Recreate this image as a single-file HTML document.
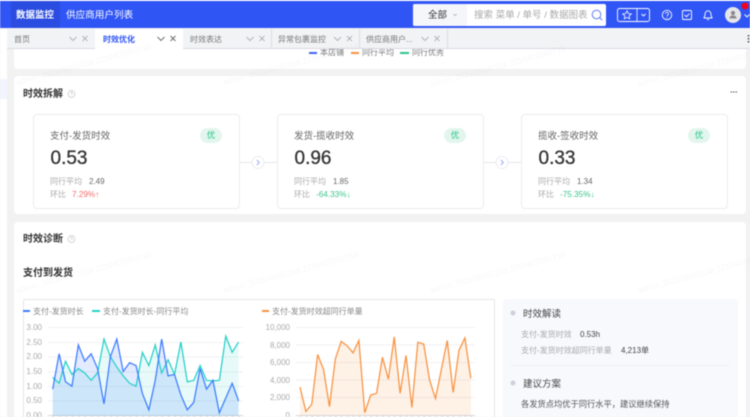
<!DOCTYPE html>
<html lang="zh">
<head>
<meta charset="utf-8">
<title>时效优化</title>
<style>
html,body{margin:0;padding:0;width:750px;height:417px;overflow:hidden;background:#f2f2f3}
body{position:relative;font-family:"Liberation Sans","Noto Sans CJK SC",sans-serif;color:#333}
#r{position:absolute;left:0;top:0;width:750px;height:417px;overflow:hidden;filter:blur(.45px)}
.b{position:absolute;box-sizing:border-box}
.t{position:absolute;white-space:nowrap;line-height:12px;height:12px;margin-top:1.5px}
.card{position:absolute;box-sizing:border-box;background:#fff;border:1px solid #ececee;border-radius:4px;top:114px;width:207px;height:95px}
.tab{font-size:8px;color:#777}
.k{font-size:9.5px;color:#666}
.v{font-size:19px;color:#333;line-height:24px;height:24px;-webkit-text-stroke:.3px #333}
.g{font-size:8px;color:#aaa}
.n{font-size:8px;color:#666}
.up{font-size:8.2px;color:#f56c6c}
.dn{font-size:8.2px;color:#3cc48c}
.badge{position:absolute;width:22px;height:15px;top:128px;border-radius:8px;background:#e3f6ee;color:#2bc48a;font-size:8.5px;line-height:15px;text-align:center}
.h{font-size:10px;font-weight:700;color:#333}
.ax{font-size:8px;color:#aaa;text-align:right;margin-top:.7px}
.l{font-size:8px;color:#888}
svg{position:absolute;left:0;top:0;overflow:visible}
</style>
</head>
<body>
<div id="r">
  <!-- sidebar -->
  <div class="b" style="left:0;top:29px;width:7px;height:388px;background:#fff"></div>
  <div class="b" style="left:0;top:79px;width:7px;height:20px;background:#f2f5ff"></div>

  <!-- cards -->
  <div class="b" style="left:14px;top:40px;width:732px;height:29px;background:#fff;border-radius:4px"></div>
  <div class="b" style="left:14px;top:76px;width:732px;height:138px;background:#fff;border-radius:4px"></div>
  <div class="b" style="left:14px;top:222px;width:732px;height:200px;background:#fff;border-radius:4px"></div>

  <!-- legend top -->
  <div class="b" style="left:309px;top:52px;width:8px;height:2px;background:#3d63f5"></div>
  <div class="t l" style="left:320px;top:45px;color:#777">本店铺</div>
  <div class="b" style="left:351px;top:52px;width:8px;height:2px;background:#f79240"></div>
  <div class="t l" style="left:362px;top:45px;color:#777">同行平均</div>
  <div class="b" style="left:400px;top:52px;width:9px;height:2px;background:#2bc48a"></div>
  <div class="t l" style="left:412px;top:45px;color:#777">同行优秀</div>

  <!-- nav -->
  <div class="b" style="left:0;top:0;width:750px;height:1px;background:#fff"></div>
  <div class="b" style="left:0;top:1px;width:750px;height:27px;background:#2f55f5"></div>
  <div class="b" style="left:11px;top:1px;width:49px;height:27px;background:#2a4ce0"></div>
  <div class="t" style="left:16px;top:8px;font-size:9.5px;font-weight:700;color:#fff">数据监控</div>
  <div class="t" style="left:66px;top:8px;font-size:9.6px;color:#fff">供应商用户列表</div>

  <div class="b" style="left:413px;top:4px;width:193px;height:22px;background:#fff;border-radius:2px"></div>
  <div class="b" style="left:413px;top:4px;width:54px;height:22px;background:#f5f6fa;border-radius:2px 0 0 2px"></div>
  <div class="t" style="left:428px;top:8px;font-size:9.5px;color:#333">全部</div>
  <div class="b" style="left:474px;top:8px;width:115px;height:15px;overflow:hidden"><div class="t" style="left:0;top:0;font-size:9.5px;color:#aaa">搜索 菜单 / 单号 / 数据图表</div></div>

  <!-- tabs -->
  <div class="b" style="left:7px;top:29px;width:743px;height:20px;background:#f2f3f5;border-bottom:1px solid #d9d9e2"></div>
  <div class="b" style="left:95px;top:29px;width:88px;height:20px;background:#fff"></div>
  <div class="b" style="left:271px;top:29px;width:1px;height:19px;background:#dcdce2"></div>
  <div class="b" style="left:359px;top:29px;width:1px;height:19px;background:#dcdce2"></div>
  <div class="b" style="left:447px;top:29px;width:1px;height:19px;background:#dcdce2"></div>
  <div class="t tab" style="left:14px;top:32.500px">首页</div>
  <div class="t tab" style="left:103px;top:32.500px;color:#2f55f5;font-weight:700">时效优化</div>
  <div class="t tab" style="left:190px;top:32.500px">时效表达</div>
  <div class="t tab" style="left:278px;top:32.500px">异常包裹监控</div>
  <div class="t tab" style="left:366px;top:32.500px">供应商用户...</div>

  <!-- main titles -->
  <div class="t h" style="left:23px;top:87px">时效拆解</div>
  <div class="t h" style="left:23px;top:232px">时效诊断</div>
  <div class="t h" style="left:23px;top:266px">支付到发货</div>

  <!-- connectors -->
  <div class="b" style="left:239px;top:162px;width:38px;height:1px;background:#e6e6e8"></div>
  <div class="b" style="left:483px;top:162px;width:39px;height:1px;background:#e6e6e8"></div>

  <!-- metric cards -->
  <div class="card" style="left:33px"></div>
  <div class="card" style="left:277px"></div>
  <div class="card" style="left:521px"></div>

  <div class="t k" style="left:50px;top:129px">支付-发货时效</div>
  <div class="t v" style="left:50.5px;top:145px">0.53</div>
  <div class="t g" style="left:50px;top:174px">同行平均</div>
  <div class="t n" style="left:89px;top:174px">2.49</div>
  <div class="t g" style="left:50px;top:187px">环比</div>
  <div class="t up" style="left:72px;top:187px">7.29%↑</div>
  <div class="badge" style="left:200px">优</div>

  <div class="t k" style="left:294px;top:129px">发货-揽收时效</div>
  <div class="t v" style="left:294.5px;top:145px">0.96</div>
  <div class="t g" style="left:294px;top:174px">同行平均</div>
  <div class="t n" style="left:333px;top:174px">1.85</div>
  <div class="t g" style="left:294px;top:187px">环比</div>
  <div class="t dn" style="left:316px;top:187px">-64.33%↓</div>
  <div class="badge" style="left:444px">优</div>

  <div class="t k" style="left:538px;top:129px">揽收-签收时效</div>
  <div class="t v" style="left:538.5px;top:145px">0.33</div>
  <div class="t g" style="left:538px;top:174px">同行平均</div>
  <div class="t n" style="left:577px;top:174px">1.34</div>
  <div class="t g" style="left:538px;top:187px">环比</div>
  <div class="t dn" style="left:560px;top:187px">-75.35%↓</div>
  <div class="badge" style="left:688px">优</div>

  <!-- diagnostics panels -->
  <div class="b" style="left:23px;top:299px;width:472px;height:130px;border:1px solid #e6e6e8;border-radius:2px;background:#fff"></div>
  <div class="b" style="left:503px;top:299px;width:235px;height:130px;background:#f8f9fd;border-radius:3px"></div>

  <!-- chart legends -->
  <div class="b" style="left:23px;top:310px;width:7px;height:2px;background:#3d7cff;z-index:2"></div>
  <div class="t l" style="left:33px;top:304px">支付-发货时长</div>
  <div class="b" style="left:92px;top:310px;width:8px;height:2px;background:#25d0c8;z-index:2"></div>
  <div class="t l" style="left:103px;top:304px">支付-发货时长-同行平均</div>
  <div class="b" style="left:262px;top:310px;width:7px;height:2px;background:#f79240;z-index:2"></div>
  <div class="t l" style="left:272px;top:304px">支付-发货时效超同行单量</div>

  <!-- axes labels -->
  <div class="t ax" style="left:12px;width:30px;top:321px">3.00</div>
  <div class="t ax" style="left:12px;width:30px;top:336px">2.50</div>
  <div class="t ax" style="left:12px;width:30px;top:350px">2.00</div>
  <div class="t ax" style="left:12px;width:30px;top:365px">1.50</div>
  <div class="t ax" style="left:12px;width:30px;top:380px">1.00</div>
  <div class="t ax" style="left:12px;width:30px;top:394px">0.50</div>
  <div class="t ax" style="left:12px;width:30px;top:409px">0.00</div>

  <div class="t ax" style="left:255px;width:35px;top:321px">10,000</div>
  <div class="t ax" style="left:255px;width:35px;top:339px">8,000</div>
  <div class="t ax" style="left:255px;width:35px;top:356px">6,000</div>
  <div class="t ax" style="left:255px;width:35px;top:374px">4,000</div>
  <div class="t ax" style="left:255px;width:35px;top:391px">2,000</div>
  <div class="t ax" style="left:255px;width:35px;top:409px">0</div>

  <!-- charts and icons -->
  <svg width="750" height="417" viewBox="0 0 750 417" xmlns="http://www.w3.org/2000/svg">
    <g stroke="#f1f1f3" stroke-width="1">
      <path d="M48 327.5H243M48 342.5H243M48 357H243M48 372H243M48 386.5H243M48 401H243"/>
      <path d="M296 327.5H475M296 345H475M296 362.5H475M296 380H475M296 397.5H475"/>
    </g>
    <path d="M48 415.5H243M296 415.5H475" stroke="#d8d8dc" stroke-width="1"/>
    <path d="M52.7 416.5H243" stroke="#c8c8cc" stroke-width="1" stroke-dasharray="1 5.41"/>
    <path d="M300 416.5H475" stroke="#c8c8cc" stroke-width="1" stroke-dasharray="1 4.89"/>
    <g transform="translate(52.7,415.7) scale(6.41,-29.47)">
      <polygon fill="#25d0c8" fill-opacity=".11" points="0,0 0,1.3 1,1.1 2,1.85 3,1.4 4,1.6 5,1.45 6,1.2 7,1.45 8,2.6 9,2 10,1.65 11,1.35 12,1.1 13,1 14,2.15 15,1.7 16,2.4 17,1.45 18,1.9 19,1.4 20,2.5 21,1.15 22,1.2 23,1.7 24,1.2 25,1.18 26,1.2 27,2.7 28,2.15 29,2.5 29,0"/>
      <polygon fill="#3d7cff" fill-opacity=".15" points="0,0 0,.9 1,2.1 2,1.15 3,1 4,2.4 5,1.85 6,2.1 7,1.6 8,.4 9,2 10,2.6 11,1.5 12,1.8 13,1.7 14,.75 15,.2 16,1.2 17,2.6 18,1.35 19,1.4 20,.7 21,.2 22,.45 23,1.6 24,.9 25,1.2 26,.1 27,.6 28,1.1 29,.5 29,0"/>
      <polyline fill="none" stroke="#25d0c8" stroke-width="1.25" vector-effect="non-scaling-stroke" points="0,1.3 1,1.1 2,1.85 3,1.4 4,1.6 5,1.45 6,1.2 7,1.45 8,2.6 9,2 10,1.65 11,1.35 12,1.1 13,1 14,2.15 15,1.7 16,2.4 17,1.45 18,1.9 19,1.4 20,2.5 21,1.15 22,1.2 23,1.7 24,1.2 25,1.18 26,1.2 27,2.7 28,2.15 29,2.5"/>
      <polyline fill="none" stroke="#3d7cff" stroke-width="1.25" vector-effect="non-scaling-stroke" points="0,.9 1,2.1 2,1.15 3,1 4,2.4 5,1.85 6,2.1 7,1.6 8,.4 9,2 10,2.6 11,1.5 12,1.8 13,1.7 14,.75 15,.2 16,1.2 17,2.6 18,1.35 19,1.4 20,.7 21,.2 22,.45 23,1.6 24,.9 25,1.2 26,.1 27,.6 28,1.1 29,.5"/>
    </g>
    <g transform="translate(300,415.3) scale(5.89,-.0088)">
      <polygon fill="#f79240" fill-opacity=".13" points="0,0 0,3200 1,450 2,1250 3,6900 4,5200 5,1000 6,6400 7,8400 8,7900 9,7100 10,8500 11,300 12,2300 13,2500 14,6600 15,4100 16,8900 17,2500 18,6800 19,900 20,8300 21,8100 22,4000 23,1900 24,5200 25,8500 26,2600 27,7400 28,8800 29,4200 29,0"/>
      <polyline fill="none" stroke="#f79240" stroke-width="1.25" vector-effect="non-scaling-stroke" points="0,3200 1,450 2,1250 3,6900 4,5200 5,1000 6,6400 7,8400 8,7900 9,7100 10,8500 11,300 12,2300 13,2500 14,6600 15,4100 16,8900 17,2500 18,6800 19,900 20,8300 21,8100 22,4000 23,1900 24,5200 25,8500 26,2600 27,7400 28,8800 29,4200"/>
    </g>

    <!-- search caret + icon -->
    <path d="M453.5 14l1.6 1.6 1.6-1.6" fill="none" stroke="#aaa" stroke-width=".8"/>
    <circle cx="596.5" cy="14.5" r="4.3" fill="none" stroke="#4f6ff5" stroke-width=".9"/>
    <path d="M599.6 17.6l2.4 2.4" stroke="#4f6ff5" stroke-width=".9"/>

    <!-- star button -->
    <rect x="617.5" y="8.5" width="32" height="13" rx="2" fill="none" stroke="#fff" stroke-width=".9"/>
    <path d="M637 8.5v13" stroke="#fff" stroke-width=".8"/>
    <path d="M627 10.8l1.3 2.7 3 .4-2.2 2 .6 2.9-2.7-1.4-2.7 1.4.6-2.9-2.2-2 3-.4z" fill="none" stroke="#fff" stroke-width=".8"/>
    <path d="M641.5 14l2 2 2-2" fill="none" stroke="#fff" stroke-width=".9"/>

    <!-- help -->
    <circle cx="667" cy="15" r="4.7" fill="none" stroke="#fff" stroke-width=".9"/>
    <path d="M665.5 13.7a1.5 1.5 0 1 1 2.3 1.3c-.6.4-.8.7-.8 1.2" fill="none" stroke="#fff" stroke-width=".8"/>
    <circle cx="667" cy="17.6" r=".5" fill="#fff"/>
    <!-- check -->
    <rect x="682.5" y="10.5" width="9" height="9" rx="1" fill="none" stroke="#fff" stroke-width=".9"/>
    <path d="M684.7 15l1.8 1.7 3-3.2" fill="none" stroke="#fff" stroke-width=".9"/>
    <!-- bell -->
    <path d="M704 18v-.6c.7-.6 1-1.2 1-3 0-2 1.2-3.6 3-3.6s3 1.6 3 3.6c0 1.8.3 2.4 1 3v.6z" fill="none" stroke="#fff" stroke-width=".9"/>
    <path d="M707 19.6h2" stroke="#fff" stroke-width=".9"/>
    <!-- avatar -->
    <circle cx="733" cy="15" r="8" fill="#e6e6ea"/>
    <circle cx="733" cy="13" r="2.1" fill="#8a8a8e"/>
    <path d="M729.5 18.5c0-2.2 1.5-3 3.5-3s3.5.8 3.500 3z" fill="#8a8a8e"/>
    <circle cx="745" cy="6" r="3.5" fill="#f5001d"/>
    <path d="M744.5 14.5l2.5 2.5 2.5-2.5" fill="none" stroke="#fff" stroke-width=".9"/>

    <!-- tab chevrons and X -->
    <g fill="none" stroke="#a2a2a8" stroke-width=".8">
      <path d="M69.5 37l3.5 3.5 3.5-3.5M82.5 36l5 5M87.5 36l-5 5"/>
      <path d="M246.5 37l3.5 3.5 3.5-3.5M259.5 36l5 5M264.5 36l-5 5"/>
      <path d="M334 37l3.5 3.5 3.5-3.5M347 36l5 5M352 36l-5 5"/>
      <path d="M421.5 37l3.5 3.5 3.5-3.5M434.5 36l5 5M439.5 36l-5 5"/>
    </g>
    <path d="M157.5 37l3.5 3.5 3.5-3.5M170.5 36l5 5M175.5 36l-5 5" fill="none" stroke="#666" stroke-width=".9"/>
    <path d="M748.5 35v1.5M748.5 38v1.5M748.5 41v1.5" stroke="#444" stroke-width="1.5"/>

    <!-- help marks -->
    <g fill="none" stroke="#bbb" stroke-width=".6">
      <circle cx="71.5" cy="94" r="3.4"/>
      <path d="M70.5 93.2a1 1 0 1 1 1.5.9c-.4.2-.5.4-.5.8"/>
      <circle cx="71.5" cy="239" r="3.4"/>
      <path d="M70.5 238.2a1 1 0 1 1 1.5.9c-.4.2-.5.4-.5.8"/>
    </g>
    <path d="M730.5 92h1.5M733 92h1.5M735.5 92h1.5" stroke="#555" stroke-width="1"/>

    <!-- arrows -->
    <circle cx="258" cy="162.5" r="6" fill="#fff" stroke="#e4e6f0" stroke-width=".8"/>
    <path d="M256.8 160l2.5 2.5-2.5 2.5" fill="none" stroke="#7d92f5" stroke-width=".8"/>
    <circle cx="502" cy="162.5" r="6" fill="#fff" stroke="#e4e6f0" stroke-width=".8"/>
    <path d="M500.8 160l2.5 2.5-2.5 2.5" fill="none" stroke="#7d92f5" stroke-width=".8"/>

    <!-- right panel dots + divider -->
    <circle cx="513" cy="313" r="2.5" fill="#cdd1dc"/>
    <circle cx="513" cy="383" r="2.5" fill="#cdd1dc"/>
    <path d="M510 365.5H730" stroke="#f0f1f5" stroke-width="1"/>

    <!-- watermarks -->
    <g font-family="Liberation Sans, sans-serif" font-size="8" fill="#000" fill-opacity=".035">
      <text transform="translate(17,85) rotate(-15)">admin_20210819210a 2210402062716</text>
      <text transform="translate(224,85) rotate(-15)">admin_20210819210a 2210402062716</text>
      <text transform="translate(431,87) rotate(-15)">admin_20210819210a 2210402062716</text>
      <text transform="translate(638,87) rotate(-15)">admin_20210819210a 2210402062716</text>
      <text transform="translate(17,293) rotate(-15)">admin_20210819210a 2210402062716</text>
      <text transform="translate(224,293) rotate(-15)">admin_20210819210a 2210402062716</text>
      <text transform="translate(431,293) rotate(-15)">admin_20210819210a 2210402062716</text>
      <text transform="translate(638,293) rotate(-15)">admin_20210819210a 2210402062716</text>
    </g>
  </svg>

  <!-- right panel text -->
  <div class="t" style="left:523px;top:307px;font-size:9.5px;color:#444">时效解读</div>
  <div class="t g" style="left:521px;top:327px">支付-发货时效</div>
  <div class="t n" style="left:580px;top:327px;color:#444">0.53h</div>
  <div class="t g" style="left:521px;top:343px">支付-发货时效超同行单量</div>
  <div class="t n" style="left:621px;top:343px;color:#444">4,213单</div>
  <div class="t" style="left:523px;top:377px;font-size:9.5px;color:#444">建议方案</div>
  <div class="t" style="left:521px;top:397px;font-size:8.26px;color:#555">各发货点均优于同行水平，建议继续保持</div>
</div>
</body>
</html>
